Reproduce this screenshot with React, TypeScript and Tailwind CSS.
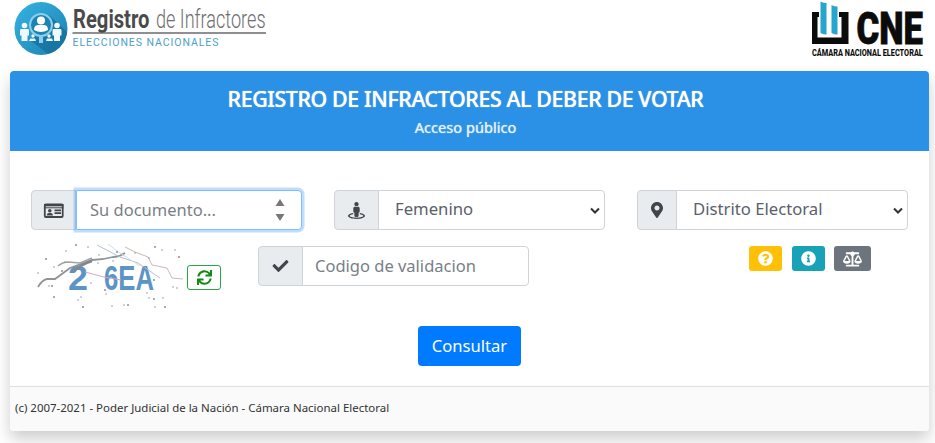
import React from 'react';
import {
  FaBalanceScale,
  FaCheck,
  FaInfoCircle,
  FaMapMarkerAlt,
  FaQuestionCircle,
  FaStreetView,
  FaSync,
} from 'react-icons/fa';

interface FieldProps {
  icon: React.ReactNode;
  children: React.ReactNode;
}

const Field: React.FC<FieldProps> = ({ icon, children }) => (
  <div className="flex w-[271px] h-10 shrink-0">
    <span className="flex min-w-[40px] shrink-0 items-center justify-center rounded-l border border-[#ced4da] bg-[#e9ecef] px-[11px] text-base text-[#40464c]">
      {icon}
    </span>
    {children}
  </div>
);

interface SelectProps {
  icon: React.ReactNode;
  label: string;
}

const SelectField: React.FC<SelectProps> = ({ icon, label }) => (
  <Field icon={icon}>
    <button className="-ml-px flex min-w-0 flex-1 items-center justify-between rounded-r border border-[#ced4da] bg-white pl-4 pr-1 pb-[3px] text-[16.7px] text-[#5a6169]">
      <span>{label}</span>
      <svg className="mt-1 h-2.5 w-2.5" viewBox="0 0 10 10" fill="none" stroke="#333" strokeWidth="2">
        <path d="M1 2.5l4 4 4-4" />
      </svg>
    </button>
  </Field>
);

const IdCardIcon = () => (
  <svg className="h-[15px] w-[21px]" viewBox="0 0 21 15">
    <rect x="1.800" y="1.500" width="17.900" height="12.500" rx="1" fill="#e9ecef" stroke="#40464c" strokeWidth="1.800" />
    <path d="M1 1h19.500v2.300H1z" fill="#40464c" />
    <path d="M1 4.300h19.500v1H1z" fill="#40464c" />
    <circle cx="6.800" cy="7.800" r="1.800" fill="#40464c" />
    <path d="M3.700 12.500q0-2.500 2-2.500h2.300q2 0 2 2.500zM11.500 6.500h6.500v1.800h-6.500zM11.500 9.200h6.500v1.800h-6.500z" fill="#40464c" />
  </svg>
);

const RegistroLogo = () => (
  <svg className="h-[60px] w-[257px] overflow-visible" viewBox="0 0 257 60">
    <defs>
      <linearGradient id="disc" x1="0" y1="0" x2="1" y2="1">
        <stop offset="0" stopColor="#35b4e3" />
        <stop offset="1" stopColor="#1c7fae" />
      </linearGradient>
      <clipPath id="discClip">
        <circle cx="31" cy="28.500" r="26.500" />
      </clipPath>
    </defs>
    <circle cx="31" cy="28.500" r="26.500" fill="url(#disc)" />
    <path d="M39 15L68 42 50 64 28 46 18 39 30 34z" fill="#176f9c" opacity="0.75" clipPath="url(#discClip)" />
    <g fill="#eef9fd">
      <circle cx="14.500" cy="25.500" r="2.800" />
      <path d="M11 29h7q1 0 1 1.500v5h-1.500V41h-6v-5.500H10v-5q0-1.500 1-1.500z" />
      <circle cx="47" cy="25.500" r="2.800" />
      <path d="M43.500 29h7q1 0 1 1.500v5H50V41h-6v-5.500h-1.500v-5q0-1.500 1-1.500z" />
      <circle cx="23" cy="36" r="1.700" />
      <path d="M20 38.500h5l1 2.500h-7z" />
      <circle cx="39" cy="36" r="1.700" />
      <path d="M37 38.500h5l1 2.500h-7z" />
    </g>
    <circle cx="31" cy="25" r="11" fill="#1c83b4" stroke="#8ad0ec" strokeWidth="2" />
    <path d="M31 36.500V43" stroke="#8ad0ec" strokeWidth="4" />
    <circle cx="31" cy="20.500" r="4" fill="#fff" />
    <path d="M24 30q0-5 4.500-5h5q4.500 0 4.500 5-7 4-14 0z" fill="#fff" />
    <text transform="translate(63 27.500) scale(.78 1)" textLength="98" lengthAdjust="spacingAndGlyphs" fontFamily="Roboto" fontWeight="700" fontSize="26.500" fill="#4a4a4c">Registro</text>
    <text transform="translate(146 27.500) scale(.7 1)" textLength="156.500" lengthAdjust="spacingAndGlyphs" fontFamily="Roboto" fontWeight="300" fontSize="26.500" fill="#6e6e71">de Infractores</text>
    <path d="M62.500 33h193.500" stroke="#6a6a6c" strokeWidth="1.500" />
    <text x="62.500" y="46" textLength="146" fontFamily="Roboto" fontSize="10.500" fill="#4d9fcb">ELECCIONES NACIONALES</text>
  </svg>
);

const CneLogo = () => (
  <svg className="h-[60px] w-[114px] overflow-visible" viewBox="0 0 114 60">
    <path d="M2 12h7v5H7.500v20.500h24V17H29v-5h9.500v32H2z" fill="#0b0b0b" />
    <path d="M10.500 1.500q3 1.500 6 1.500v31.500q-3 0-6-1.500z" fill="#27a5cf" />
    <path d="M21.500 5q3 1.500 6 1.500v28q-3 0-6-1.500z" fill="#27a5cf" />
    <text transform="translate(46.500 44) scale(.8 1)" textLength="83" lengthAdjust="spacingAndGlyphs" fontFamily="Roboto" fontWeight="900" fontSize="44" fill="#0b0b0b" stroke="#0b0b0b" strokeWidth="0.800">CNE</text>
    <text transform="translate(2 55.700) scale(.8 1)" textLength="138.500" lengthAdjust="spacingAndGlyphs" fontFamily="Roboto" fontWeight="800" fontSize="9" fill="#0b0b0b">CÁMARA NACIONAL ELECTORAL</text>
  </svg>
);

const specks = [
  [9, 16], [17, 24], [29, 8], [39, 2], [51, 4], [62, 12], [80, 9], [98, 10], [112, 15], [118, 4],
  [1, 30], [12, 43], [15, 43], [28, 19], [54, 40], [68, 47], [84, 31], [107, 25], [117, 37], [136, 44],
  [140, 45], [17, 54], [44, 54], [41, 57], [46, 64], [75, 63], [87, 62], [91, 62], [110, 50], [112, 55],
  [117, 56], [126, 55], [118, 64], [128, 64], [125, 7], [138, 7], [142, 14], [76, 18], [61, 20], [25, 28], [92, 25], [69, 51],
];

const Captcha = () => (
  <svg className="h-[66px] w-[150px]" viewBox="0 0 150 66">
    <g fontFamily="Liberation Sans" fontWeight="700" fontSize="35" fill="#5b94c6">
      <text x="31" y="47" textLength="20" lengthAdjust="spacingAndGlyphs">2</text>
      <text x="67" y="47" textLength="50" lengthAdjust="spacingAndGlyphs">6EA</text>
    </g>
    <g fill="none">
      <path d="M1 44q4-7 9-8h8l15-11 22-8q10 0 21-3 6 0 12-4" stroke="#909496" strokeWidth="1.800" />
      <path d="M21 23q5-4 10-4l12 1 12-5" stroke="#a2a3a3" strokeWidth="1.600" />
      <path d="M37 29q5-7 18-11" stroke="#81888d" strokeWidth="2.400" />
      <path d="M60 2l23 12 18 6 22 15" stroke="#b7c0cf" />
      <path d="M71 1l12 9 20 13" stroke="#d5dbed" />
      <path d="M88 4l10 5 13 5 4 8 15 3 5 10 11 1" stroke="#cdb8b2" />
      <path d="M48 29q20 6 36 8" stroke="#d8a7bf" />
    </g>
    {specks.map(([x, y], i) => (
      <circle key={i} cx={x} cy={y} r={i % 3 === 0 ? 1 : 0.75} fill={i % 4 === 0 ? '#a18186' : '#8692a2'} />
    ))}
  </svg>
);

const App: React.FC = () => (
  <div className="h-[443px] overflow-hidden bg-white font-['Noto_Sans',sans-serif]">
    <header className="flex h-[71px] items-start justify-between pl-2.5 pr-[11px]">
      <RegistroLogo />
      <CneLogo />
    </header>

    <main className="ml-2.5 mr-1.5 flex h-[360px] flex-col rounded bg-white shadow-[0_8px_16px_rgba(0,0,0,0.2)]">
      <div className="flex h-20 shrink-0 flex-col items-center rounded-t bg-[#2a91e6] pr-2 pt-[15px] text-white">
        <h1 className="text-[21.4px] font-medium leading-[26px] tracking-[-0.4px] [text-shadow:0_0_1px_#fff]">REGISTRO DE INFRACTORES AL DEBER DE VOTAR</h1>
        <p className="text-[14.6px] leading-[30px] text-[#e3f1fc] [text-shadow:0_0_1px_#e3f1fc]">Acceso público</p>
      </div>

      <form className="flex flex-1 flex-col pl-[21px] pr-[21px] pt-[39px]">
        <div className="flex justify-between">
          <Field icon={<IdCardIcon />}>
            <div className="flex min-w-0 flex-1 items-center justify-between rounded-r border border-[#80bdff] bg-white pl-[13px] pr-4 text-[16.5px] text-[#777f87] shadow-[0_0_0_2.5px_rgba(0,123,255,0.25)]">
              <span>Su documento...</span>
              <svg className="h-6 w-2.5" viewBox="0 0 10 24" fill="#777">
                <path d="M5 1l4.500 7h-9zM5 23l4.500-7h-9z" />
              </svg>
            </div>
          </Field>
          <SelectField icon={<FaStreetView className="h-[17px] w-[21px]" />} label="Femenino" />
          <SelectField icon={<FaMapMarkerAlt className="h-4 w-4" />} label="Distrito Electoral" />
        </div>

        <div className="mt-4 flex h-16 items-start">
          <div className="ml-1.5 -mt-[3px]">
            <Captcha />
          </div>
          <button className="mt-[19px] flex h-[25px] w-[34px] items-center justify-center rounded-[3px] border border-[#28a745] text-[#138a13]">
            <FaSync className="h-[15px] w-[15px]" />
          </button>
          <div className="ml-[37px]">
            <Field icon={<FaCheck className="h-4 w-[21px]" />}>
              <div className="-ml-px flex flex-1 items-center rounded-r border border-[#ced4da] bg-white pl-3 text-[16.5px] text-[#777f87]">
                Codigo de validacion
              </div>
            </Field>
          </div>
          <div className="ml-auto mr-[37px] flex gap-[9px] text-white">
            <button className="flex h-[25px] w-[33px] items-center justify-center rounded-[3px] bg-[#ffc107]">
              <FaQuestionCircle className="h-[15px] w-[15px]" />
            </button>
            <button className="ml-px flex h-[25px] w-[33px] items-center justify-center rounded-[3px] bg-[#17a2b8]">
              <FaInfoCircle className="h-[15px] w-[15px]" />
            </button>
            <button className="flex h-[25px] w-[37px] items-center justify-center rounded-[3px] bg-[#6c757d]">
              <FaBalanceScale className="h-4 w-[19px]" />
            </button>
          </div>
        </div>

        <button className="mt-4 h-10 w-[103px] self-center rounded bg-[#007bff] text-[16.6px] text-white">Consultar</button>
      </form>

      <footer className="h-[45px] shrink-0 rounded-b border-t border-[#dfdfdf] bg-[#fafafa] pl-[5px] pt-3 text-[11.46px] leading-[18px] text-[#333]">
        (c) 2007-2021 - Poder Judicial de la Nación - Cámara Nacional Electoral
      </footer>
    </main>
  </div>
);

export default App;
